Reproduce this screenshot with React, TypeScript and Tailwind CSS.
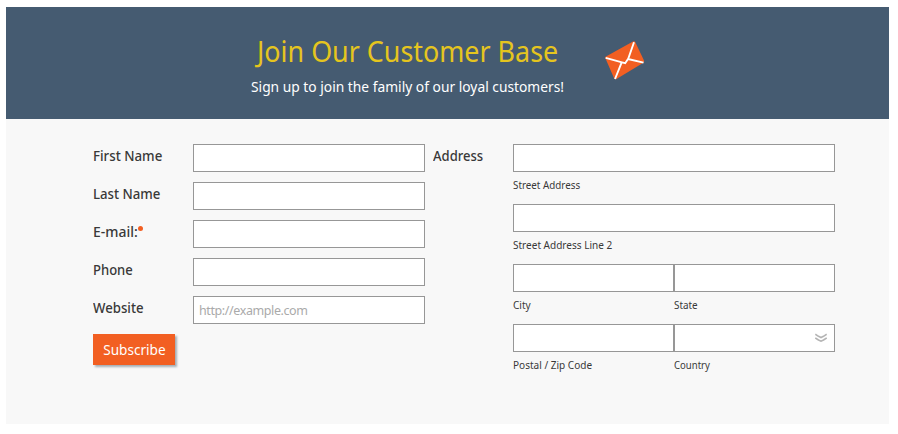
import React from "react";

type FieldProps = { label: string; scale: string; required?: boolean; placeholder?: string };

function Field({ label, scale, required, placeholder }: FieldProps) {
  return (
    <div className="flex h-[38px] items-start">
      <label className="flex w-[100px] shrink-0 pt-px text-[15px] leading-5 font-medium text-[#393939]">
        <span className={"inline-block origin-left whitespace-nowrap " + scale}>{label}</span>
        {required && <span className="mt-[5px] -ml-[3px] size-[5px] rounded-full bg-[#f25f22]" />}
      </label>
      <input
        placeholder={placeholder}
        className="h-7 w-[232px] border border-[#979797] bg-white px-[5px] text-[12.5px] tracking-[-0.4px] outline-none placeholder:text-[#aaaaaa]"
      />
    </div>
  );
}

type SubProps = { caption: string; size: string; scale: string; dropdown?: boolean };

function SubField({ caption, size, scale, dropdown }: SubProps) {
  return (
    <div className={"h-[60px] " + size}>
      <div className="relative">
        <input className="block h-7 w-full border border-[#979797] bg-white px-[5px] text-[13px] outline-none" />
        {dropdown && (
          <svg className="absolute top-[9px] right-[8px]" width="12" height="10" viewBox="0 0 12 10" fill="none" stroke="#b4b4b4" strokeWidth="1.6">
            <path d="M.3 1.2L3.5 3.3L6 4.5L8.5 3.3L11.7 1.2M.3 4.9L3.5 7L6 8.2L8.5 7L11.7 4.9" />
          </svg>
        )}
      </div>
      <div className={"mt-[5px] w-max origin-left text-[10.5px] leading-4 whitespace-nowrap text-[#393939] " + scale}>{caption}</div>
    </div>
  );
}

export default function App() {
  return (
    <div className="h-[434px] w-[898px] bg-white pt-[7px] pl-[6px] font-['Noto_Sans',sans-serif]">
      <div className="h-[417px] w-[883px] bg-[#f8f8f8]">
        <header className="flex h-[112px] bg-[#455b71] pl-[245px]">
          <div className="w-[353px] pt-[26px]">
            <h1 className="ml-[6px] w-max origin-left scale-x-[0.943] text-[28.5px] leading-9 whitespace-nowrap text-[#e5c51e]">Join Our Customer Base</h1>
            <p className="mt-[7px] w-max origin-left scale-x-[0.92] text-[15px] leading-5 whitespace-nowrap text-white">Sign up to join the family of our loyal customers!</p>
          </div>
          <svg className="mt-[33px]" width="42" height="41" viewBox="0 0 42 41">
            <path d="M1.5 18.5Q.4 17.8 1.5 16.8L29 1.5Q30.5 .9 31.2 2L40 20.5Q40.5 22 39.4 22.8L12.5 39Q11 39.8 10.2 38.5Z" fill="#f25f22" />
            <path d="M1.7 17.8L18 22.3L21.2 23.2L24.3 18.6L30 2.2M11 39L17.7 22.3M24 19L39.5 22.7" fill="none" stroke="#fff" strokeWidth="1.9" />
          </svg>
        </header>
        <main className="flex pt-[25px] pl-[87px]">
          <div className="w-[340px]">
            <Field label="First Name" scale="scale-x-[0.885]" />
            <Field label="Last Name" scale="scale-x-[0.88]" />
            <Field label="E-mail:" scale="scale-x-[0.93]" required />
            <Field label="Phone" scale="scale-x-[0.87]" />
            <Field label="Website" scale="scale-x-[0.88]" placeholder="http://example.com" />
            <button className="block h-[31px] w-[82px] bg-[#f25f22] text-[15px] leading-5 text-white shadow-[2px_2px_2px_#a6aeb4]">
              <span className="relative -top-px inline-block scale-x-[0.905]">Subscribe</span>
            </button>
          </div>
          <div className="w-20 pt-px text-[15px] leading-5 font-medium text-[#393939]">
            <span className="inline-block origin-left scale-x-[0.87]">Address</span>
          </div>
          <div className="flex w-[322px] flex-wrap">
            <SubField caption="Street Address" size="w-full" scale="scale-x-[0.935]" />
            <SubField caption="Street Address Line 2" size="w-full" scale="scale-x-[0.955]" />
            <SubField caption="City" size="w-1/2" scale="scale-x-[0.96]" />
            <SubField caption="State" size="w-1/2" scale="scale-x-[0.94]" />
            <SubField caption="Postal / Zip Code" size="w-1/2" scale="scale-x-[0.955]" />
            <SubField caption="Country" size="w-1/2" scale="scale-x-[0.91]" dropdown />
          </div>
        </main>
      </div>
    </div>
  );
}
